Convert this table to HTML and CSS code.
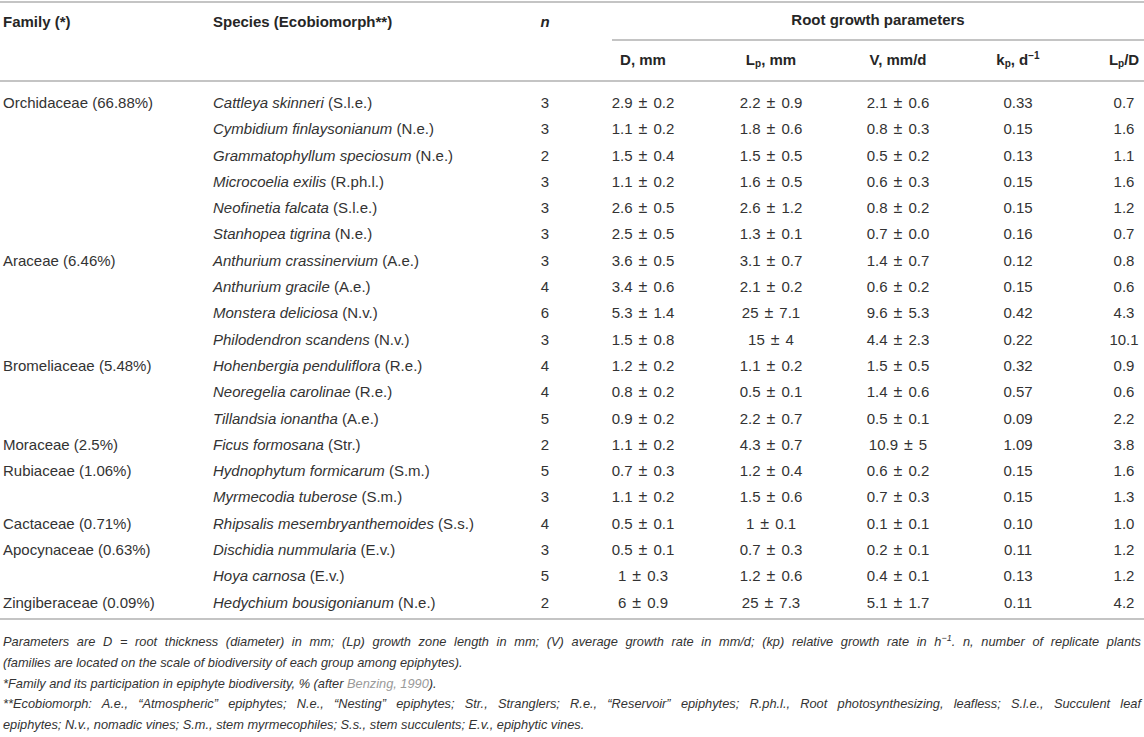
FILE: index.html
```html
<!DOCTYPE html>
<html lang="en">
<head>
<meta charset="utf-8">
<title>Root growth parameters of epiphytes</title>
<link rel="stylesheet" href="styles.css">
</head>
<body>
<table class="data">
  <colgroup>
    <col class="c-family"><col class="c-species"><col class="c-n"><col class="c-d"><col class="c-lp"><col class="c-v"><col class="c-kp"><col class="c-lpd">
  </colgroup>
  <thead>
    <tr class="h1">
      <th rowspan="2" class="left">Family (*)</th>
      <th rowspan="2" class="left">Species (Ecobiomorph**)</th>
      <th rowspan="2"><i>n</i></th>
      <th colspan="5" class="group"><div class="group-title">Root growth parameters</div></th>
    </tr>
    <tr class="h2">
      <th>D, mm</th>
      <th>L<sub>p</sub>, mm</th>
      <th>V, mm/d</th>
      <th>k<sub>p</sub>, d<sup>−1</sup></th>
      <th class="last">L<sub>p</sub>/D</th>
    </tr>
  </thead>
  <tbody>
    <tr><td class="left">Orchidaceae (66.88%)</td><td class="left"><i>Cattleya skinneri</i> (S.l.e.)</td><td>3</td><td>2.9<span class="pm">±</span>0.2</td><td>2.2<span class="pm">±</span>0.9</td><td>2.1<span class="pm">±</span>0.6</td><td>0.33</td><td class="last">0.7</td></tr>
    <tr><td class="left"></td><td class="left"><i>Cymbidium finlaysonianum</i> (N.e.)</td><td>3</td><td>1.1<span class="pm">±</span>0.2</td><td>1.8<span class="pm">±</span>0.6</td><td>0.8<span class="pm">±</span>0.3</td><td>0.15</td><td class="last">1.6</td></tr>
    <tr><td class="left"></td><td class="left"><i>Grammatophyllum speciosum</i> (N.e.)</td><td>2</td><td>1.5<span class="pm">±</span>0.4</td><td>1.5<span class="pm">±</span>0.5</td><td>0.5<span class="pm">±</span>0.2</td><td>0.13</td><td class="last">1.1</td></tr>
    <tr><td class="left"></td><td class="left"><i>Microcoelia exilis</i> (R.ph.l.)</td><td>3</td><td>1.1<span class="pm">±</span>0.2</td><td>1.6<span class="pm">±</span>0.5</td><td>0.6<span class="pm">±</span>0.3</td><td>0.15</td><td class="last">1.6</td></tr>
    <tr><td class="left"></td><td class="left"><i>Neofinetia falcata</i> (S.l.e.)</td><td>3</td><td>2.6<span class="pm">±</span>0.5</td><td>2.6<span class="pm">±</span>1.2</td><td>0.8<span class="pm">±</span>0.2</td><td>0.15</td><td class="last">1.2</td></tr>
    <tr><td class="left"></td><td class="left"><i>Stanhopea tigrina</i> (N.e.)</td><td>3</td><td>2.5<span class="pm">±</span>0.5</td><td>1.3<span class="pm">±</span>0.1</td><td>0.7<span class="pm">±</span>0.0</td><td>0.16</td><td class="last">0.7</td></tr>
    <tr><td class="left">Araceae (6.46%)</td><td class="left"><i>Anthurium crassinervium</i> (A.e.)</td><td>3</td><td>3.6<span class="pm">±</span>0.5</td><td>3.1<span class="pm">±</span>0.7</td><td>1.4<span class="pm">±</span>0.7</td><td>0.12</td><td class="last">0.8</td></tr>
    <tr><td class="left"></td><td class="left"><i>Anthurium gracile</i> (A.e.)</td><td>4</td><td>3.4<span class="pm">±</span>0.6</td><td>2.1<span class="pm">±</span>0.2</td><td>0.6<span class="pm">±</span>0.2</td><td>0.15</td><td class="last">0.6</td></tr>
    <tr><td class="left"></td><td class="left"><i>Monstera deliciosa</i> (N.v.)</td><td>6</td><td>5.3<span class="pm">±</span>1.4</td><td>25<span class="pm">±</span>7.1</td><td>9.6<span class="pm">±</span>5.3</td><td>0.42</td><td class="last">4.3</td></tr>
    <tr><td class="left"></td><td class="left"><i>Philodendron scandens</i> (N.v.)</td><td>3</td><td>1.5<span class="pm">±</span>0.8</td><td>15<span class="pm">±</span>4</td><td>4.4<span class="pm">±</span>2.3</td><td>0.22</td><td class="last">10.1</td></tr>
    <tr><td class="left">Bromeliaceae (5.48%)</td><td class="left"><i>Hohenbergia penduliflora</i> (R.e.)</td><td>4</td><td>1.2<span class="pm">±</span>0.2</td><td>1.1<span class="pm">±</span>0.2</td><td>1.5<span class="pm">±</span>0.5</td><td>0.32</td><td class="last">0.9</td></tr>
    <tr><td class="left"></td><td class="left"><i>Neoregelia carolinae</i> (R.e.)</td><td>4</td><td>0.8<span class="pm">±</span>0.2</td><td>0.5<span class="pm">±</span>0.1</td><td>1.4<span class="pm">±</span>0.6</td><td>0.57</td><td class="last">0.6</td></tr>
    <tr><td class="left"></td><td class="left"><i>Tillandsia ionantha</i> (A.e.)</td><td>5</td><td>0.9<span class="pm">±</span>0.2</td><td>2.2<span class="pm">±</span>0.7</td><td>0.5<span class="pm">±</span>0.1</td><td>0.09</td><td class="last">2.2</td></tr>
    <tr><td class="left">Moraceae (2.5%)</td><td class="left"><i>Ficus formosana</i> (Str.)</td><td>2</td><td>1.1<span class="pm">±</span>0.2</td><td>4.3<span class="pm">±</span>0.7</td><td>10.9<span class="pm">±</span>5</td><td>1.09</td><td class="last">3.8</td></tr>
    <tr><td class="left">Rubiaceae (1.06%)</td><td class="left"><i>Hydnophytum formicarum</i> (S.m.)</td><td>5</td><td>0.7<span class="pm">±</span>0.3</td><td>1.2<span class="pm">±</span>0.4</td><td>0.6<span class="pm">±</span>0.2</td><td>0.15</td><td class="last">1.6</td></tr>
    <tr><td class="left"></td><td class="left"><i>Myrmecodia tuberose</i> (S.m.)</td><td>3</td><td>1.1<span class="pm">±</span>0.2</td><td>1.5<span class="pm">±</span>0.6</td><td>0.7<span class="pm">±</span>0.3</td><td>0.15</td><td class="last">1.3</td></tr>
    <tr><td class="left">Cactaceae (0.71%)</td><td class="left"><i>Rhipsalis mesembryanthemoides</i> (S.s.)</td><td>4</td><td>0.5<span class="pm">±</span>0.1</td><td>1<span class="pm">±</span>0.1</td><td>0.1<span class="pm">±</span>0.1</td><td>0.10</td><td class="last">1.0</td></tr>
    <tr><td class="left">Apocynaceae (0.63%)</td><td class="left"><i>Dischidia nummularia</i> (E.v.)</td><td>3</td><td>0.5<span class="pm">±</span>0.1</td><td>0.7<span class="pm">±</span>0.3</td><td>0.2<span class="pm">±</span>0.1</td><td>0.11</td><td class="last">1.2</td></tr>
    <tr><td class="left"></td><td class="left"><i>Hoya carnosa</i> (E.v.)</td><td>5</td><td>1<span class="pm">±</span>0.3</td><td>1.2<span class="pm">±</span>0.6</td><td>0.4<span class="pm">±</span>0.1</td><td>0.13</td><td class="last">1.2</td></tr>
    <tr><td class="left">Zingiberaceae (0.09%)</td><td class="left"><i>Hedychium bousigonianum</i> (N.e.)</td><td>2</td><td>6<span class="pm">±</span>0.9</td><td>25<span class="pm">±</span>7.3</td><td>5.1<span class="pm">±</span>1.7</td><td>0.11</td><td class="last">4.2</td></tr>
  </tbody>
</table>
<div class="notes">
  <p><span class="line full">Parameters are D = root thickness (diameter) in mm; (Lp) growth zone length in mm; (V) average growth rate in mm/d; (kp) relative growth rate in h<sup>−1</sup>. n, number of replicate plants</span><span class="line">(families are located on the scale of biodiversity of each group among epiphytes).</span></p>
  <p>*Family and its participation in epiphyte biodiversity, % (after <a class="ref" href="#">Benzing, 1990</a>).</p>
  <p><span class="line full">**Ecobiomorph: A.e., “Atmospheric” epiphytes; N.e., “Nesting” epiphytes; Str., Stranglers; R.e., “Reservoir” epiphytes; R.ph.l., Root photosynthesizing, leafless; S.l.e., Succulent leaf</span><span class="line">epiphytes; N.v., nomadic vines; S.m., stem myrmecophiles; S.s., stem succulents; E.v., epiphytic vines.</span></p>
</div>
</body>
</html>
```

FILE: styles.css
```css
html, body {
  margin: 0;
  padding: 0;
  background: #ffffff;
}

body {
  padding-top: 1px;
  font-family: "Liberation Sans", Arial, Helvetica, sans-serif;
  color: #333333;
  width: 1144px;
}

.data {
  width: 1144px;
  table-layout: fixed;
  border-collapse: separate;
  border-spacing: 0;
  font-size: 15px;
}

.c-family { width: 210px; }
.c-species { width: 305px; }
.c-n { width: 60px; }
.c-d { width: 136px; }
.c-lp { width: 120px; }
.c-v { width: 134px; }
.c-kp { width: 106px; }
.c-lpd { width: 73px; }

th, td {
  text-align: center;
  padding: 0;
  white-space: nowrap;
}

th {
  font-weight: bold;
  color: #262626;
  line-height: 18px;
}

.left {
  text-align: left;
  padding-left: 3px;
}

.last {
  padding-left: 33px;
}

.h1 th {
  border-top: 2px solid #c4c4c4;
  vertical-align: top;
  padding-top: 10px;
}

.h1 th[rowspan] {
  border-bottom: 2px solid #c4c4c4;
}

.h1 .group {
  padding-top: 8px;
}

.group-title {
  margin-left: 37px;
  padding-bottom: 10px;
  border-bottom: 2px solid #c4c4c4;
}

.h2 th {
  padding-top: 10px;
  padding-bottom: 11px;
  border-bottom: 2px solid #c4c4c4;
}

sub, sup {
  font-size: 10px;
  line-height: 0;
}

sub { vertical-align: -2px; }
sup { vertical-align: 6px; }

td {
  padding-top: 4px;
  padding-bottom: 4px;
  line-height: 18.3px;
  vertical-align: middle;
}

tbody tr:first-child td {
  padding-top: 12px;
}

tbody tr:last-child td {
  padding-bottom: 6px;
  border-bottom: 2px solid #c4c4c4;
}

.pm {
  font-size: 16px;
  margin: 0 6px;
}

.notes {
  margin-top: 12px;
  font-size: 12.8px;
  font-style: italic;
  line-height: 20.8px;
  padding-left: 3px;
  padding-right: 3px;
}

.notes p {
  margin: 0;
}

.line {
  display: block;
  white-space: nowrap;
}

.line.full {
  text-align: justify;
  text-align-last: justify;
}

.notes sup {
  font-size: 9px;
  vertical-align: 5px;
}

.ref {
  color: #9a9a9a;
  text-decoration: none;
}
```
